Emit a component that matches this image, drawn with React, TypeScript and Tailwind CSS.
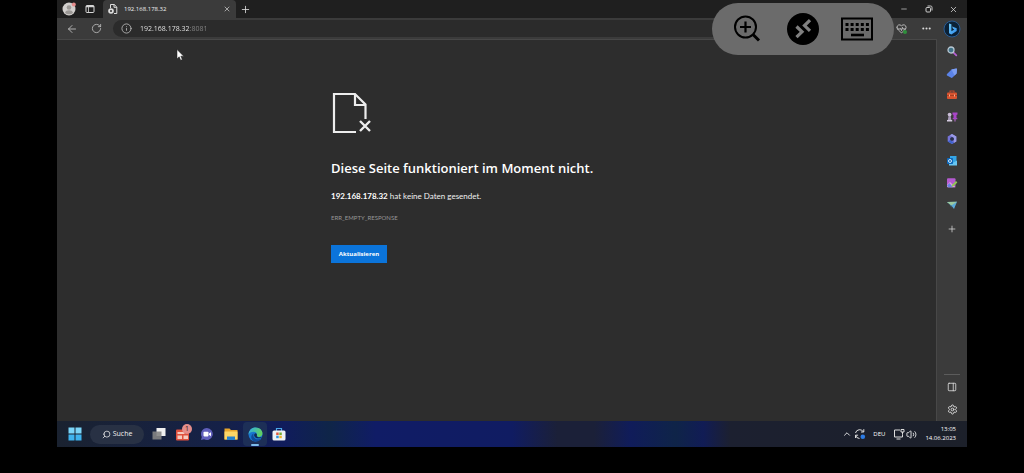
import { ReactNode } from "react";
import {
  ArrowLeft,
  ChevronUp,
  HeartPulse,
  Info,
  Minus,
  MoreHorizontal,
  PanelRight,
  Plus,
  RotateCw,
  Search,
  Settings,
  Volume2,
  X,
} from "lucide-react";

const BingIcon = () => (
  <svg viewBox="0 0 18 18" className="h-[18px] w-[18px]">
    <defs>
      <linearGradient id="bing" x1="0" y1="0" x2="1" y2="1">
        <stop offset="0" stopColor="#6cc8f5" />
        <stop offset="1" stopColor="#2f8df0" />
      </linearGradient>
    </defs>
    <circle cx="9" cy="9" r="8" fill="#0b2136" stroke="#2a5c94" strokeWidth="1" />
    <path d="M6 3.4l2.400.8v7l3-1.700-1.400-.7-.9-2.200 4.600 1.700v2.600L8.400 14.600 6 13.300z" fill="url(#bing)" />
  </svg>
);

const SearchColorIcon = () => (
  <svg viewBox="0 0 12 12" className="h-3 w-3">
    <path d="M7.3 7.3l3 3" stroke="#b45fd0" strokeWidth="1.8" strokeLinecap="round" />
    <circle cx="5" cy="5" r="3" fill="#3f7287" stroke="#b9c8d4" strokeWidth="1.3" />
  </svg>
);

const ShoppingIcon = () => (
  <svg viewBox="0 0 12 12" className="h-3 w-3">
    <path d="M1 7l4.500-4.500 4.700-1c.6 0 .9.300.8.8L10.600 6.500 6.500 10.500c-.5.500-1.200.500-1.700 0L1 8.400c-.4-.4-.4-1 0-1.400z" fill="#5b83e8" />
    <path d="M5.500 2.500l4.700-1c.6 0 .9.300.8.8L10.600 6.500 8.500 8.500z" fill="#7c9df0" />
  </svg>
);

const ToolsIcon = () => (
  <svg viewBox="0 0 12 12" className="h-3 w-3">
    <path d="M4 3.500V2h4v1.500" fill="none" stroke="#c5472b" strokeWidth="1.100" />
    <rect x="1" y="3.500" width="10" height="6.500" rx="1" fill="#d9532f" />
    <path d="M1 6.500h10" stroke="#9e3820" strokeWidth=".8" />
    <path d="M3.500 5.500v2M8.500 5.500v2" stroke="#f4b08f" />
  </svg>
);

const GamesIcon = () => (
  <svg viewBox="0 0 12 12" className="h-3 w-3">
    <circle cx="3.600" cy="3.600" r="1.900" fill="#c9bdd6" />
    <path d="M2.600 5h2l.8 4H1.800z" fill="#a79ab8" />
    <path d="M1 9h5.200v1.500H1z" fill="#d5cbe0" />
    <path d="M6.500 1.500h5v2l-1 .5v3h.8v1.300H6.700V7h.8V4l-1-.5z" fill="#a945c7" />
    <path d="M9 8v2.500" stroke="#bd6ed6" />
  </svg>
);

const OfficeIcon = () => (
  <svg viewBox="0 0 12 12" className="h-3 w-3">
    <path d="M6 1l4.300 2.500v5L6 11 1.700 8.500v-5z" fill="#7573d8" />
    <path d="M6 1l4.300 2.500v5L8 9.800V5L4 2.200z" fill="#9a9be6" />
    <path d="M1.700 8.500L4.300 7 8 9.800 6 11z" fill="#3f63cc" />
    <path d="M6 4l1.800 1v2L6 8 4.200 7V5z" fill="#28304c" />
  </svg>
);

const OutlookIcon = () => (
  <svg viewBox="0 0 12 12" className="h-3 w-3">
    <rect x="4" y="1" width="6.500" height="7" fill="#35a5e5" />
    <path d="M3 5.500l4 2.200 4-2.200V10.500H3z" fill="#67c6f2" />
    <rect x="1" y="3" width="6" height="6" rx=".8" fill="#0d68bb" />
    <circle cx="4" cy="6" r="1.500" fill="none" stroke="#e5f3fc" strokeWidth=".9" />
  </svg>
);

const ImageCreatorIcon = () => (
  <svg viewBox="0 0 12 12" className="h-3 w-3">
    <rect x="1" y="1.200" width="8.500" height="9" rx="1" fill="#b45ad0" />
    <path d="M1 8l3-3 5.500 5.200H2c-.6 0-1-.3-1-1z" fill="#e3a6dc" />
    <path d="M1 8.500L3.500 6 7 10.200H2z" fill="#6b80e3" />
    <path d="M5.500 9.800l.6-2L10 4l1.400 1.400-3.900 3.800z" fill="#91c754" />
  </svg>
);

const DropIcon = () => (
  <svg viewBox="0 0 12 12" className="h-3 w-3">
    <path d="M1 3l10-.3L8 10 5.300 6.500z" fill="#5aa9d9" />
    <path d="M1 3l10-.3L5.300 6.500z" fill="#9cc9a0" />
    <path d="M3.300 5.200l2 1.300.4 2.300z" fill="#3d7a9e" />
  </svg>
);

const sidebarApps = [
  { label: "Suchen", icon: <SearchColorIcon /> },
  { label: "Shopping", icon: <ShoppingIcon /> },
  { label: "Tools", icon: <ToolsIcon /> },
  { label: "Spiele", icon: <GamesIcon /> },
  { label: "Microsoft 365", icon: <OfficeIcon /> },
  { label: "Outlook", icon: <OutlookIcon /> },
  { label: "Image Creator", icon: <ImageCreatorIcon /> },
  { label: "Drop", icon: <DropIcon /> },
];

const TabStrip = () => (
  <div className="flex h-[18px] items-center bg-[#1f1f1f]">
    <button aria-label="Profil" className="ml-1 flex w-4 justify-center">
      <svg viewBox="0 0 14 14" className="h-[14px] w-[14px]">
        <circle cx="7" cy="7" r="6.500" fill="#d2cfcd" />
        <circle cx="7" cy="5.500" r="2.300" fill="#9b9895" />
        <path d="M3 10.800c.6-3.300 7.400-3.300 8 0-2 2-6 2-8 0z" fill="#9b9895" />
        <circle cx="11.800" cy="2.400" r="2" fill="#e68d8d" />
      </svg>
    </button>
    <button aria-label="Tabaktionen" className="ml-[5px] flex w-4 justify-center">
      <svg viewBox="0 0 10 10" className="h-[10px] w-[10px]" fill="none" stroke="#d6d6d6">
        <rect x="1" y="1.500" width="8" height="7" rx="1" />
        <path d="M1 2.500h8" strokeWidth="1.500" />
        <path d="M3.500 3v5.500" strokeWidth=".8" />
      </svg>
    </button>
    <div className="ml-[5px] flex h-full w-[133px] items-center rounded-t bg-[#3b3b3b] pr-[5px] pl-1">
      <svg viewBox="0 0 12 12" className="h-3 w-3" fill="none" stroke="#dedede">
        <path d="M3.500 5V1.500h3.700L9.800 4v6.500H7" />
        <path d="M7 1.500V4.300h2.800" />
        <circle cx="4" cy="8" r="2.800" fill="#dedede" stroke="none" />
        <path d="M3 7l2 2M5 7L3 9" stroke="#3b3b3b" strokeWidth=".8" />
      </svg>
      <span className="ml-[5px] flex-1 text-[6px] text-[#f0f0f0]">192.168.178.32</span>
      <button aria-label="Tab schließen">
        <X className="h-2 w-2" />
      </button>
    </div>
    <button aria-label="Neuer Tab" className="ml-1">
      <Plus className="h-[11px] w-[11px]" strokeWidth={1.800} />
    </button>
    <div className="ml-auto flex pr-px">
      <button aria-label="Minimieren" className="flex w-[25px] justify-center">
        <Minus className="h-2 w-2" />
      </button>
      <button aria-label="Wiederherstellen" className="flex w-[25px] justify-center">
        <svg viewBox="0 0 8 8" className="h-2 w-2" fill="none" stroke="currentColor" strokeWidth=".9">
          <rect x="1" y="2.500" width="4.500" height="4.500" rx="1" />
          <path d="M2.500 1h3c1 0 1.500.5 1.500 1.500v3" />
        </svg>
      </button>
      <button aria-label="Schließen" className="flex w-[25px] justify-center">
        <X className="h-[9px] w-[9px]" />
      </button>
    </div>
  </div>
);

const Toolbar = () => (
  <div className="flex h-[21px] items-center bg-[#3b3b3b]">
    <button aria-label="Zurück" className="ml-[9px]">
      <ArrowLeft className="h-3 w-3 text-[#bdbdbd]" strokeWidth={1.800} />
    </button>
    <button aria-label="Neu laden" className="ml-[13px]">
      <RotateCw className="h-[11px] w-[11px] text-[#bdbdbd]" strokeWidth={1.800} />
    </button>
    <div className="ml-[11px] flex h-[17px] flex-1 items-center rounded-full bg-[#2b2b2b] pl-2">
      <Info className="h-[11px] w-[11px] text-[#bdbdbd]" strokeWidth={1.800} />
      <input
        aria-label="Adresse"
        defaultValue="192.168.178.32:8081"
        className="ml-2 h-3 flex-1 bg-linear-to-r from-[#f4f4f4] from-[50px] to-[#858585] to-[50px] bg-clip-text text-[7px] text-transparent outline-none"
      />
    </div>
    <button aria-label="Browser-Essentials" className="relative ml-2">
      <HeartPulse className="h-[11px] w-[11px] text-[#d0d0d0]" strokeWidth={1.800} />
      <span className="absolute right-0 bottom-0 h-1 w-1 rounded-full bg-[#2f8f3c]" />
    </button>
    <button aria-label="Mehr" className="ml-[14px]">
      <MoreHorizontal className="h-[11px] w-[11px]" strokeWidth={2.500} />
    </button>
    <button aria-label="Bing" className="mr-[6px] ml-[11px]">
      <BingIcon />
    </button>
  </div>
);

const ErrorPage = () => (
  <main className="min-w-0 flex-1 border-t border-r border-[#484848] bg-[#2d2d2d] pt-[52px]">
    <div className="mx-auto max-w-[331px]">
      <svg viewBox="0 0 42 42" className="h-[42px] w-[42px]" fill="none" stroke="#ededed" strokeWidth="2.200">
        <path d="M25 40H3V2h21l10.500 10.500V27" />
        <path d="M24 2v11h10.500" />
        <path d="M29 29l10 10M39 29L29 39" strokeWidth="2.400" />
      </svg>
      <h1 className="mt-[26px] text-[13px] leading-4 font-semibold whitespace-nowrap text-white">
        Diese Seite funktioniert im Moment nicht.
      </h1>
      <p className="mt-3 font-[Lato,sans-serif] text-[8px] leading-4 whitespace-nowrap text-[#f0f0f0]">
        <strong className="text-white">192.168.178.32</strong> hat keine Daten gesendet.
      </p>
      <p className="mt-2 font-[Lato,sans-serif] text-[6px] leading-3 text-[#969696]">ERR_EMPTY_RESPONSE</p>
      <button className="mt-[21px] flex h-[18px] w-14 items-center justify-center bg-[#0b74da] text-[6px] font-bold text-white">
        Aktualisieren
      </button>
    </div>
  </main>
);

const Sidebar = () => (
  <aside className="flex w-[30px] flex-col items-center bg-[#3b3b3b] py-px">
    {sidebarApps.map((app) => (
      <button key={app.label} aria-label={app.label} className="flex h-[22px] w-full items-center justify-center">
        {app.icon}
      </button>
    ))}
    <button aria-label="Anpassen" className="mt-[2px] flex h-[22px] w-full items-center justify-center">
      <Plus className="h-[10px] w-[10px]" strokeWidth={1.800} />
    </button>
    <div className="mt-auto mb-px h-px w-4 bg-[#5c5c5c]" />
    <button aria-label="Seitenleiste" className="flex h-[22px] items-center">
      <PanelRight className="h-[10px] w-[10px]" />
    </button>
    <button aria-label="Einstellungen" className="flex h-[22px] items-center">
      <Settings className="h-[11px] w-[11px]" />
    </button>
  </aside>
);

// dark toolbar of the remote desktop client, floats above the session
const RemoteToolbar = () => (
  <div className="absolute top-[3px] right-[73px] flex h-[52px] w-[182px] items-center rounded-full bg-[#6b6b6b] text-black">
    <button aria-label="Zoom" className="ml-[21px]">
      <svg viewBox="0 0 28 28" className="h-7 w-7" fill="none" stroke="currentColor" strokeWidth="2">
        <circle cx="12.500" cy="12" r="10.500" />
        <path d="M12.500 6.500v11M7 12h11" strokeWidth="2.200" />
        <path d="M20 19.500l6 6" strokeWidth="3" />
      </svg>
    </button>
    <button aria-label="Verbindung" className="ml-[26px]">
      <svg viewBox="0 0 32 32" className="h-8 w-8" fill="none" stroke="#808080" strokeWidth="3.200">
        <circle cx="16" cy="16" r="16" fill="#000" stroke="none" />
        <path d="M9.500 13.500l5.500 5.300-5.500 5.400" />
        <path d="M23 7.200l-5.500 5.400 5.500 5.300" />
      </svg>
    </button>
    <button aria-label="Tastatur" className="ml-[21px]">
      <svg viewBox="0 0 34 24" className="h-6 w-[34px]" fill="none" stroke="currentColor">
        <rect x="2" y="1.500" width="30" height="21" strokeWidth="2" />
        <path d="M5.500 7.500h24M5.500 12.500h24" strokeWidth="3" strokeDasharray="3 2.100" />
        <path d="M11 18h13" strokeWidth="2.600" />
      </svg>
    </button>
  </div>
);

const TaskbarButton = ({ label, active, children }: { label: string; active?: boolean; children: ReactNode }) => (
  <button
    aria-label={label}
    className={`relative flex h-6 w-6 items-center justify-center rounded-sm ${active ? "bg-[#1d2f57]" : ""}`}
  >
    {children}
    {active && <span className="absolute bottom-0 left-2 h-0.5 w-2 rounded-full bg-[#7cbcec]" />}
  </button>
);

const Taskbar = () => (
  <footer className="flex h-[26px] items-center bg-[linear-gradient(to_right,#1a2230_0%,#152148_18%,#101c5c_25%,#0f2548_30%,#101c66_35%,#101c62_50%,#1b2038_55%,#1b2038_59%,#101c5a_63%,#0f2448_68%,#111c55_71%,#1c2030_74%,#1c202a_100%)]">
    <button aria-label="Start" className="ml-[11px]">
      <svg viewBox="0 0 14 14" className="h-[14px] w-[14px]">
        <path d="M.5.5h6v6h-6zM7.500.5h6v6h-6z" fill="#7bd5f8" />
        <path d="M.5 7.500h6v6h-6zM7.500 7.500h6v6h-6z" fill="#3fb3ee" />
      </svg>
    </button>
    <button className="ml-2 flex h-[19px] w-[54px] items-center justify-center gap-[2px] rounded-full bg-[#283144] text-[7px] text-[#f0f0f0]">
      <Search className="h-[9px] w-[9px] -scale-x-100" />
      Suche
    </button>
    <div className="ml-[3px] flex">
      <TaskbarButton label="Taskansicht">
        <svg viewBox="0 0 14 14" className="h-[14px] w-[14px]">
          <rect x="4.500" y="1" width="9" height="8" fill="#f0f0f0" />
          <rect x=".5" y="4.500" width="9" height="8" fill="#848484" opacity=".9" />
        </svg>
      </TaskbarButton>
      <TaskbarButton label="Widgets">
        <svg viewBox="0 0 16 16" className="h-4 w-4">
          <rect x="1" y="3.500" width="13" height="11" rx="1" fill="#df513e" />
          <path d="M2.500 6h7v2h-7zM2.500 9.500h4.500v3.500H2.500zM8.500 9.500H13v3.500H8.500z" fill="#f6cabe" />
        </svg>
        <span className="absolute top-[2px] right-[3px] h-[10px] w-[10px] rounded-full bg-[#e48d8b] text-center text-[7px] leading-[10px] text-[#3a1515]">
          1
        </span>
      </TaskbarButton>
      <TaskbarButton label="Chat">
        <svg viewBox="0 0 14 14" className="h-[14px] w-[14px]">
          <path d="M7 1a6 6 0 1 1-3 11.300L1 13l.8-3A6 6 0 0 1 7 1z" fill="#605fbb" />
          <rect x="3.500" y="4.800" width="5" height="4.600" rx=".8" fill="#fff" />
          <path d="M9 6.500l2-1.300v4L9 7.800z" fill="#fff" />
        </svg>
      </TaskbarButton>
      <TaskbarButton label="Explorer">
        <svg viewBox="0 0 14 14" className="h-[14px] w-[14px]">
          <path d="M.5 1.500h5L7 3h6.500v9.500H.5z" fill="#e7a62c" />
          <path d="M.5 4.500h13v8H.5z" fill="#fbd667" />
          <path d="M3 9.500h8v3.500H3z" fill="#2381ce" />
        </svg>
      </TaskbarButton>
      <TaskbarButton label="Edge" active>
        <svg viewBox="0 0 14 14" className="h-[15px] w-[15px]">
          <defs>
            <linearGradient id="edge" x1="0" y1="0" x2="1" y2=".4">
              <stop offset="0" stopColor="#2fa9e8" />
              <stop offset="1" stopColor="#61d163" />
            </linearGradient>
          </defs>
          <circle cx="7" cy="7" r="6.500" fill="#1977cf" />
          <path d="M.5 7C.8 3 3.500.5 7 .5c4 0 6.500 2.700 6.500 5.500 0 2-1.500 3.300-3.500 3.300-1.500 0-2.200-.6-1.700-1.300C9 6.500 7.500 4.500 5.300 4.500 3 4.500 1 5.700.5 7z" fill="url(#edge)" />
          <path d="M5 7.200c-.4 2.400 2 4.500 4.500 4.300 1.300-.1 2.300-.5 3-1-1.200 2-3.300 3-5.500 3C4.800 13.500 3 11.500 3 9.500 3 8 4 6.500 5.300 6z" fill="#104b99" />
          <path d="M6.500 6c-.8.6-.9 1.400-.7 2.100.5 1.800 2.600 2.800 5 2.400 1.200-.2 2-.6 2.300-.9-.7-.2-2 .2-3.400-.1C8.200 9.300 8 8.600 8.300 8 8.700 7.200 7.800 5.600 6.500 6z" fill="#122a54" />
        </svg>
      </TaskbarButton>
      <TaskbarButton label="Store">
        <svg viewBox="0 0 14 14" className="h-[14px] w-[14px]">
          <path d="M4.500 4V1.500h5V4" fill="none" stroke="#4aa7e8" strokeWidth="1.200" />
          <rect x=".5" y="3.500" width="13" height="10" rx="1.500" fill="#eef1f5" />
          <path d="M4.200 5.500h2.500V8H4.200z" fill="#e0563b" />
          <path d="M7.300 5.500h2.500V8H7.300z" fill="#74ac35" />
          <path d="M4.200 8.700h2.500v2.500H4.200z" fill="#2d93dc" />
          <path d="M7.300 8.700h2.500v2.500H7.300z" fill="#efb52c" />
        </svg>
      </TaskbarButton>
    </div>
    <div className="ml-auto flex items-center pr-[11px] text-[6px] text-white">
      <button aria-label="Ausgeblendete Symbole">
        <ChevronUp className="h-[10px] w-[10px]" />
      </button>
      <svg viewBox="0 0 12 12" className="ml-[2px] h-3 w-3" fill="none" stroke="#dcdcdc">
        <path d="M1.500 5a4.300 4.300 0 0 1 8-1M9.800 1.200V4H7M1.500 7a4.300 4.300 0 0 0 4 3.500M1.500 10V7.200h2.600" />
        <circle cx="8.800" cy="8.800" r="2.300" fill="#2c7be5" stroke="none" />
      </svg>
      <button className="ml-[7px]">DEU</button>
      <svg viewBox="0 0 12 12" className="ml-2 h-3 w-3" fill="none" stroke="#dcdcdc">
        <path d="M7 2H1.500v7h8V6.500M3.500 11h4" />
        <path d="M8 1.500h3v2.500H8zM9.500 4v2.500" />
      </svg>
      <Volume2 className="ml-px h-[11px] w-[11px]" strokeWidth={1.800} />
      <div className="ml-2 text-right leading-[9px]">
        <div>13:05</div>
        <div>14.06.2023</div>
      </div>
    </div>
  </footer>
);

export default function App() {
  return (
    <div className="flex min-h-screen flex-col bg-black px-[57px] pb-[26px] font-['Open_Sans',sans-serif] text-[#dcdcdc]">
      <div className="relative flex flex-1 flex-col">
        <TabStrip />
        <Toolbar />
        <div className="flex flex-1">
          <ErrorPage />
          <Sidebar />
        </div>
        <Taskbar />
        <RemoteToolbar />
        <svg viewBox="0 0 8 12" className="absolute top-[49px] left-[119px] h-3 w-2">
          <path d="M1 .5v9.300l2.200-2 1.500 3.500 1.600-.7-1.500-3.400h2.900z" fill="#fff" stroke="#222" strokeWidth=".5" />
        </svg>
      </div>
    </div>
  );
}
